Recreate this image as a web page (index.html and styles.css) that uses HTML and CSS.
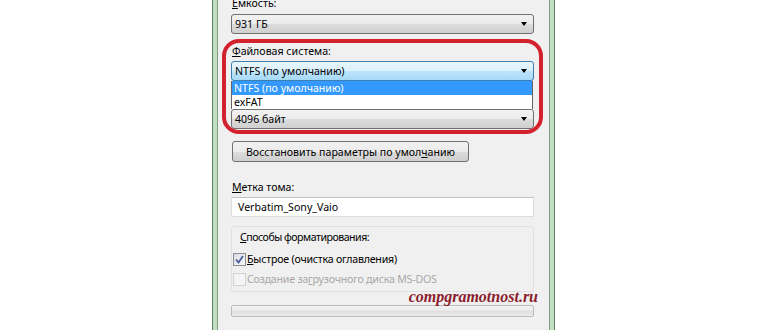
FILE: index.html
```html
<!DOCTYPE html>
<html lang="ru">

<head>
    <meta charset="UTF-8" />
    <title>Форматирование диска</title>
    <link rel="stylesheet" href="styles.css">
</head>

<body>
    <div class="window">
        <div class="panel">
            <div class="label label-first"><u>Е</u>мкость:</div>
            <div class="combo combo-first"><span>931 ГБ</span><i class="arrow"></i></div>

            <div class="label label-fs"><u>Ф</u>айловая система:</div>
            <div class="combo combo-focus"><span>NTFS (по умолчанию)</span><i class="arrow"></i></div>
            <ul class="dropdown">
                <li class="selected">NTFS (по умолчанию)</li>
                <li>exFAT</li>
            </ul>
            <div class="combo"><span>4096 байт</span><i class="arrow"></i></div>

            <button class="btn">Восстановить параметры по умол<u>ч</u>анию</button>

            <div class="label label-vol"><u>М</u>етка тома:</div>
            <div class="textbox">Verbatim_Sony_Vaio</div>

            <div class="group">
                <div class="group-title"><u>С</u>пособы форматирования:</div>
                <div class="check">
                    <span class="box box-checked">
                        <svg width="9" height="9" viewBox="0 0 9 9">
                            <path d="M1 4.5 L3.5 7.5 L8 1" fill="none" stroke="#4d5f9a" stroke-width="1.8" />
                        </svg>
                    </span>
                    <span><u>Б</u>ыстрое (очистка оглавления)</span>
                </div>
                <div class="check check-disabled">
                    <span class="box"></span>
                    <span>Создание за<u>г</u>рузочного диска MS-DOS</span>
                </div>
            </div>

            <div class="progress"></div>

            <!-- пометка поверх скриншота -->
            <div class="highlight"></div>
            <div class="watermark">compgramotnost.ru</div>
        </div>
    </div>
</body>

</html>
```

FILE: styles.css
```css
body {
    margin: 0;
    background: #fff;
    font-family: "Noto Sans", "Open Sans", sans-serif;
    font-size: 10.6px;
    color: #000;
}

.window {
    margin-left: 212px;
    width: 343px;
    height: 330px;
    box-sizing: border-box;
    border-left: 1px solid #5b835b;
    border-right: 1px solid #5b835b;
    padding: 0 4px;
    background: #c4dec4;
}

.panel {
    position: relative;
    box-sizing: border-box;
    height: 100%;
    overflow: hidden;
    border-left: 1px solid #7fa07f;
    border-right: 1px solid #7fa07f;
    background: #f0f0f0;
    padding: 0 15px 0 13px;
}

.label {
    height: 15px;
    line-height: 15px;
    padding-left: 1px;
    white-space: nowrap;
}

.label-first {
    margin-top: -4px;
}

.label-fs {
    margin-top: 10px;
}

.label-vol {
    margin-top: 18px;
}

/* Комбобоксы */
.combo {
    display: flex;
    align-items: center;
    justify-content: space-between;
    box-sizing: border-box;
    height: 20px;
    padding: 0 6px 0 3px;
    border: 1px solid #707070;
    border-radius: 3px;
    background: linear-gradient(#f2f2f2, #ebebeb 50%, #dddddd 50%, #cfcfcf);
}

.combo-first {
    margin-top: 3px;
}

.label-fs + .combo {
    margin-top: 2px;
}

.combo-focus {
    border-color: #3c7fb1;
    background: linear-gradient(#eaf6fd, #d9f0fc 50%, #bee6fd 50%, #a7d9f5);
}

.arrow {
    width: 0;
    height: 0;
    border-left: 3.5px solid transparent;
    border-right: 3.5px solid transparent;
    border-top: 4px solid #000;
}

.dropdown {
    list-style: none;
    margin: 0 1px 0 0;
    padding: 0;
    background: #fff;
    border-left: 1px solid #646464;
    border-right: 1px solid #646464;
}

.dropdown li {
    height: 14px;
    line-height: 14px;
    padding-left: 2px;
}

.dropdown .selected {
    background: #3399ff;
    color: #fff;
}

/* Кнопка */
.btn {
    display: block;
    box-sizing: border-box;
    width: 237px;
    height: 21px;
    margin: 12px 0 0 1px;
    padding: 0;
    border: 1px solid #707070;
    border-radius: 3px;
    background: linear-gradient(#f2f2f2, #ebebeb 50%, #dddddd 50%, #cfcfcf);
    font: inherit;
    color: #000;
    white-space: nowrap;
}

.textbox {
    box-sizing: border-box;
    height: 20px;
    margin-top: 2px;
    padding-left: 6px;
    line-height: 18px;
    background: #fff;
    border: 1px solid #dedede;
    border-top-color: #c4c4c4;
}

/* Группа способов форматирования */
.group {
    margin-top: 9px;
    padding: 3px 2px 2px 1px;
    border: 1px solid #e0e0e0;
    border-radius: 3px;
}

.group-title {
    height: 15px;
    line-height: 15px;
    padding-left: 7px;
    margin-bottom: 4px;
    letter-spacing: -0.5px;
    white-space: nowrap;
}

.check {
    display: flex;
    align-items: center;
    height: 20px;
    white-space: nowrap;
    letter-spacing: -0.2px;
}

.box {
    display: flex;
    align-items: center;
    justify-content: center;
    box-sizing: border-box;
    width: 13px;
    height: 13px;
    margin-right: 1px;
    border: 1px solid #8e8f8f;
    background: linear-gradient(135deg, #cbcfd5, #f6f6f6);
}

.box-checked {
    background: linear-gradient(135deg, #d8dde6, #f8f9fb);
}

.check-disabled {
    color: #a8a8a8;
}

.check-disabled .box {
    border-color: #d2d2d2;
    background: #f5f5f5;
}

.progress {
    box-sizing: border-box;
    height: 12px;
    margin-top: 13px;
    border: 1px solid #bcbcbc;
    border-radius: 2px;
    background: linear-gradient(#f4f4f4, #e8e8e8 50%, #dedede 50%, #ebebeb);
}

/* Красная обводка и подпись сайта */
.highlight {
    position: absolute;
    left: 4px;
    top: 39px;
    width: 321px;
    height: 95px;
    box-sizing: border-box;
    border: 4px solid #d3212e;
    border-radius: 17px;
}

.watermark {
    position: absolute;
    right: 11px;
    top: 287px;
    font-family: "Liberation Serif", serif;
    font-style: italic;
    font-weight: bold;
    font-size: 16px;
    line-height: 20px;
    color: #8b1d2d;
}
```
